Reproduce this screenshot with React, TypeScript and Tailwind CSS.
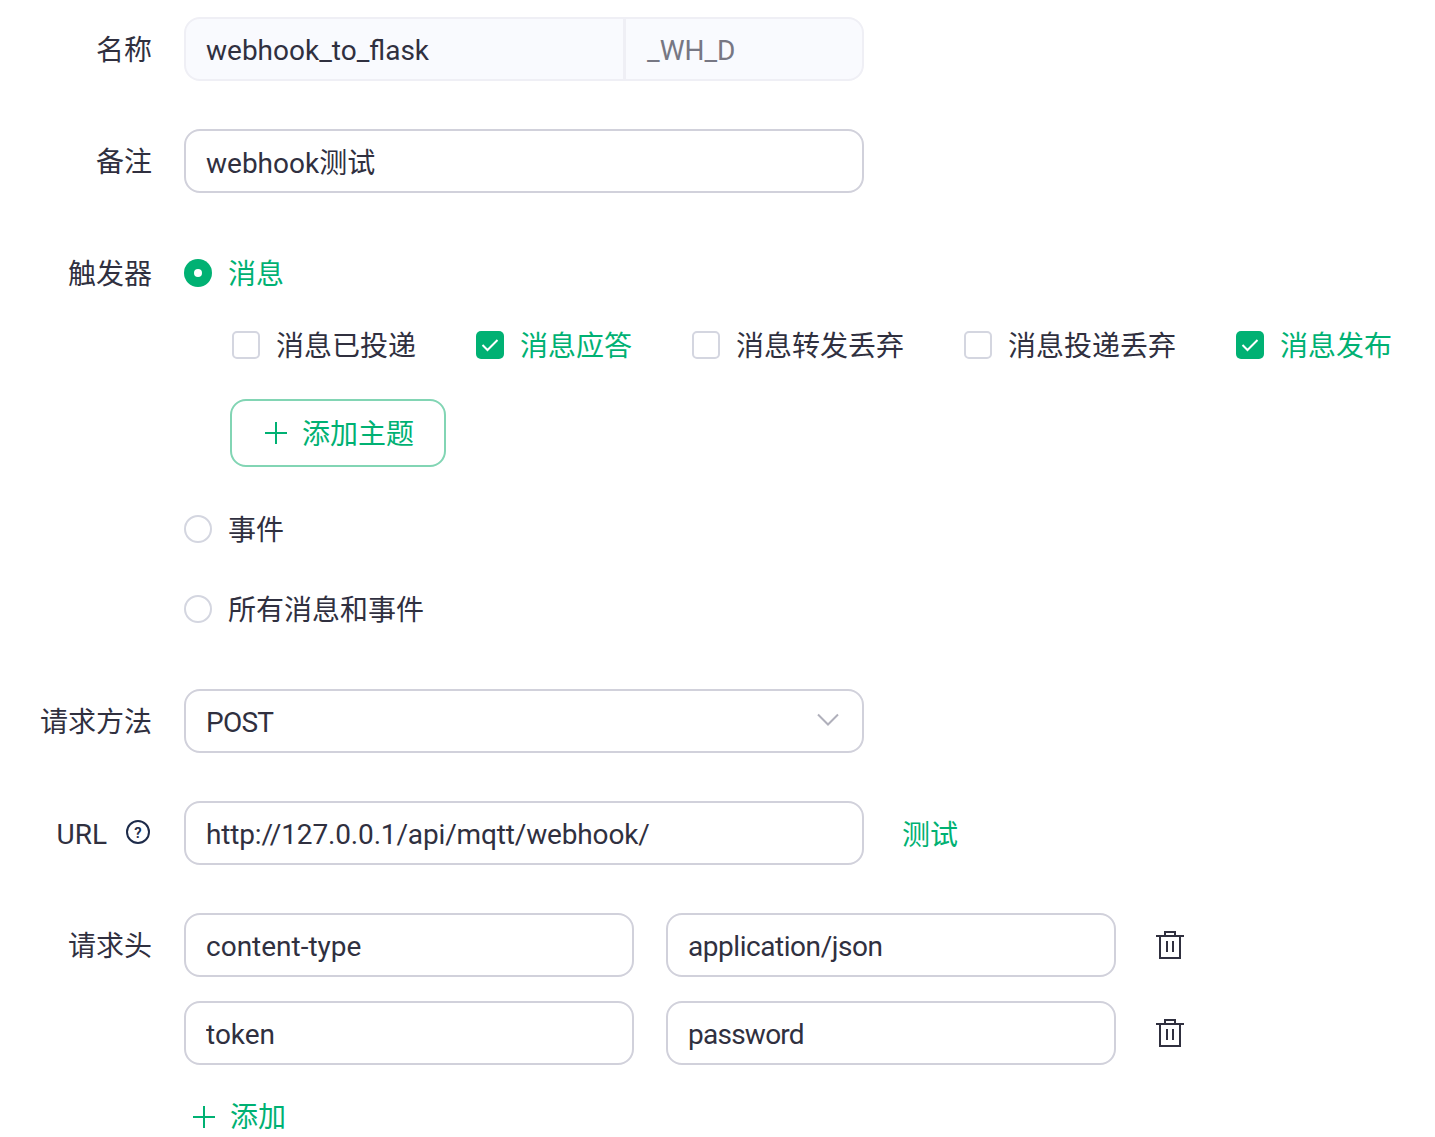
const font = "font-['Roboto','Noto_Sans_CJK_SC',sans-serif]";

function Label({ children }: { children: React.ReactNode }) {
  return (
    <div className="w-[184px] shrink-0 pr-8 pt-1 h-16 flex items-center justify-end text-[28px] text-[#30303f]">
      {children}
    </div>
  );
}

function Field({ value, width = "w-[680px]", extra = "pt-0.5" }: { value: string; width?: string; extra?: string }) {
  return (
    <input
      readOnly
      value={value}
      className={`${width} ${extra} h-16 rounded-2xl border-2 border-[#d1d1db] bg-white px-5 text-[28px] text-[#30303f] outline-none`}
    />
  );
}

function Check({ label, checked }: { label: string; checked?: boolean }) {
  return (
    <label className={`flex items-center gap-4 ${checked ? "text-[#00b173]" : "text-[#30303f]"}`}>
      {checked ? (
        <span className="w-7 h-7 rounded-[5px] bg-[#00b173] flex items-center justify-center">
          <svg width="18" height="18" viewBox="0 0 18 18" fill="none" stroke="#fff" strokeWidth="2">
            <path d="M1.5 9l5 5 10-10" />
          </svg>
        </span>
      ) : (
        <span className="w-7 h-7 rounded-[5px] border-2 border-[#d4d6e0] bg-white" />
      )}
      <span className="pt-1">{label}</span>
    </label>
  );
}

function Radio({ label, checked }: { label: string; checked?: boolean }) {
  return (
    <div className={`h-16 flex items-center gap-4 text-[28px] ${checked ? "text-[#00b173]" : "text-[#30303f]"}`}>
      {checked ? (
        <span className="w-7 h-7 rounded-full bg-[#00b173] flex items-center justify-center">
          <span className="w-2 h-2 rounded-full bg-white" />
        </span>
      ) : (
        <span className="w-7 h-7 rounded-full border-2 border-[#d4d6e0] bg-white" />
      )}
      <span className="pt-1">{label}</span>
    </div>
  );
}

function Plus() {
  return (
    <svg width="22" height="22" viewBox="0 0 22 22" fill="none" stroke="#00b173" strokeWidth="2">
      <path d="M11 0v22M0 11h22" />
    </svg>
  );
}

function Trash() {
  return (
    <svg width="28" height="28" viewBox="0 0 28 28" fill="none" stroke="#30303f" strokeWidth="2">
      <path d="M0 5h28M9 5V1h10v4M4 5v22h20V5M11 10v11M17 10v11" />
    </svg>
  );
}

export default function App() {
  return (
    <div className={`${font} h-[1137px] overflow-hidden bg-white pt-[17px] text-[#30303f]`}>
      <div className="flex mb-12">
        <Label>名称</Label>
        <div className="w-[680px] h-16 flex rounded-2xl border-2 border-[#efeff5] bg-[#f9fafe] text-[28px]">
          <div className="w-[440px] flex items-center pl-5 pt-1 border-r-[3px] border-[#efeff5] text-[#30303f]">webhook_to_flask</div>
          <div className="flex-1 flex items-center pl-[21px] pt-1 text-[#777783]">_WH_D</div>
        </div>
      </div>

      <div className="flex mb-12">
        <Label>备注</Label>
        <Field value="webhook测试" extra="pt-0" />
      </div>

      <div className="flex mb-12">
        <Label>触发器</Label>
        <div>
          <Radio label="消息" checked />
          <div className="pl-12 mt-2">
            <div className="h-16 flex items-center gap-[60px] text-[28px] whitespace-nowrap">
              <Check label="消息已投递" />
              <Check label="消息应答" checked />
              <Check label="消息转发丢弃" />
              <Check label="消息投递丢弃" />
              <Check label="消息发布" checked />
            </div>
            <button className="-ml-0.5 mt-[22px] w-[216px] h-[68px] rounded-2xl border-2 border-[#82d5b4] flex items-center pl-[33px] gap-[15px] text-[28px] text-[#00b173]">
              <Plus />
              <span className="pt-1">添加主题</span>
            </button>
          </div>
          <div className="mt-[30px]">
            <Radio label="事件" />
          </div>
          <div className="mt-4">
            <Radio label="所有消息和事件" />
          </div>
        </div>
      </div>

      <div className="flex mb-12">
        <Label>请求方法</Label>
        <div className="w-[680px] h-16 rounded-2xl border-2 border-[#d1d1db] px-5 flex items-center justify-between text-[28px]">
          <span className="pt-1 tracking-[-0.75px]">POST</span>
          <svg width="22" height="14" viewBox="0 0 22 14" fill="none" stroke="#b0b0bb" strokeWidth="2" className="mr-[3px] -mt-[3px]">
            <path d="M1 1.5l10 10 10-10" />
          </svg>
        </div>
      </div>

      <div className="flex mb-12">
        <Label>
          URL
          <svg width="26" height="26" viewBox="0 0 26 26" fill="none" className="ml-[18px] mr-px -mt-1.5">
            <circle cx="13" cy="13" r="11" stroke="#1d2b4a" strokeWidth="2" />
            <text x="13" y="18.5" textAnchor="middle" fontSize="15" fontWeight="600" fill="#1d2b4a">?</text>
          </svg>
        </Label>
        <Field value="http://127.0.0.1/api/mqtt/webhook/" extra="pt-0.5 tracking-[-0.15px]" />
        <div className="ml-[38px] h-16 pt-1.5 flex items-center text-[28px] text-[#00b173]">测试</div>
      </div>

      <div className="flex">
        <Label>请求头</Label>
        <div className="flex flex-col gap-6">
          <div className="flex items-center">
            <Field value="content-type" width="w-[450px]" />
            <div className="w-8" />
            <Field value="application/json" width="w-[450px]" extra="pt-0.5 tracking-[-0.45px]" />
            <div className="ml-10"><Trash /></div>
          </div>
          <div className="flex items-center">
            <Field value="token" width="w-[450px]" />
            <div className="w-8" />
            <Field value="password" width="w-[450px]" extra="pt-0.5 tracking-[-0.75px]" />
            <div className="ml-10"><Trash /></div>
          </div>
          <div className="h-16 -mt-1 pl-[9px] flex items-center gap-[15px] text-[28px] text-[#00b173]">
            <Plus />
            <span className="pt-0.5">添加</span>
          </div>
        </div>
      </div>
    </div>
  );
}
